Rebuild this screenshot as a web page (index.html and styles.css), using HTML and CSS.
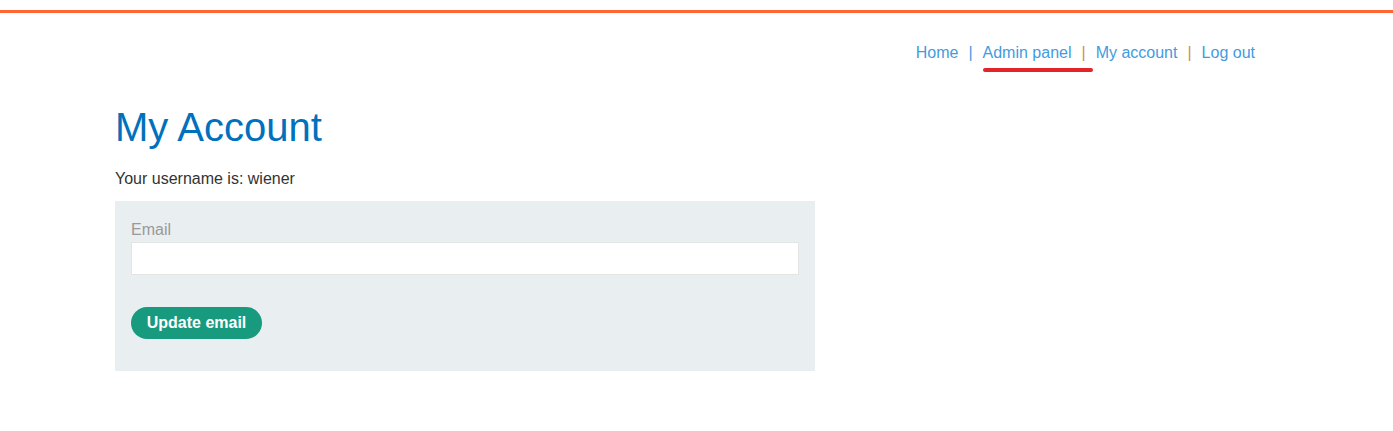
FILE: index.html
```html
<!DOCTYPE html>
<html lang="en">
<head>
<meta charset="utf-8">
<title>My Account</title>
<link rel="stylesheet" href="styles.css">
</head>
<body>
<div class="topbar"></div>
<div class="page">
  <nav class="nav">
    <a class="nav-link" href="#">Home</a>
    <span class="sep">|</span>
    <a class="nav-link marked" href="#">Admin panel<span class="mark"></span></a>
    <span class="sep sep-alt">|</span>
    <a class="nav-link" href="#">My account</a>
    <span class="sep sep-alt">|</span>
    <a class="nav-link" href="#">Log out</a>
  </nav>
  <h1 class="title">My Account</h1>
  <p class="username">Your username is: wiener</p>
  <form class="email-form">
    <label class="label" for="email">Email</label>
    <input class="input" id="email" type="email">
    <button class="btn" type="button">Update email</button>
  </form>
</div>
</body>
</html>
```
FILE: styles.css
```css
html, body {
  margin: 0;
  padding: 0;
  background: #fff;
}
body {
  font-family: "Liberation Sans", Arial, sans-serif;
  font-size: 16px;
  line-height: 20px;
  color: #333332;
}
.topbar {
  margin-top: 10px;
  height: 3px;
  background: #ff6633;
}
.page {
  padding: 0 115px;
}
.nav {
  display: flex;
  justify-content: flex-end;
  align-items: center;
  gap: 10px;
  margin-top: 30px;
  padding-right: 23px;
  height: 20px;
}
.nav-link {
  color: #3f9ce0;
  text-decoration: none;
}
.marked {
  position: relative;
}
.mark {
  position: absolute;
  left: 0;
  top: 25px;
  width: 110px;
  height: 4px;
  border-radius: 2px;
  background: #e3242b;
}
.sep {
  color: #3f9ce0;
}
.sep-alt {
  color: #d98a3a;
}
.title {
  margin: 40px 0 0;
  font-size: 40px;
  line-height: 48px;
  font-weight: normal;
  color: #0071bc;
}
.username {
  margin: 18px 0 0;
}
.email-form {
  margin-top: 12px;
  width: 700px;
  box-sizing: border-box;
  padding: 19px 16px 32px;
  background: #e9eef1;
  display: flex;
  flex-direction: column;
  align-items: flex-start;
}
.label {
  color: #999;
  line-height: 20px;
}
.input {
  margin: 2px 0 0;
  width: 100%;
  height: 33px;
  box-sizing: border-box;
  border: 1px solid #e4e4e4;
  background: #fff;
  padding: 0 8px;
  font: inherit;
  outline: none;
}
.btn {
  margin-top: 32px;
  width: 131px;
  height: 32px;
  border: none;
  border-radius: 16px;
  background: #179a7e;
  color: #fff;
  font-family: "Liberation Sans", Arial, sans-serif;
  font-size: 16px;
  font-weight: bold;
  padding: 0;
  cursor: pointer;
}
```
